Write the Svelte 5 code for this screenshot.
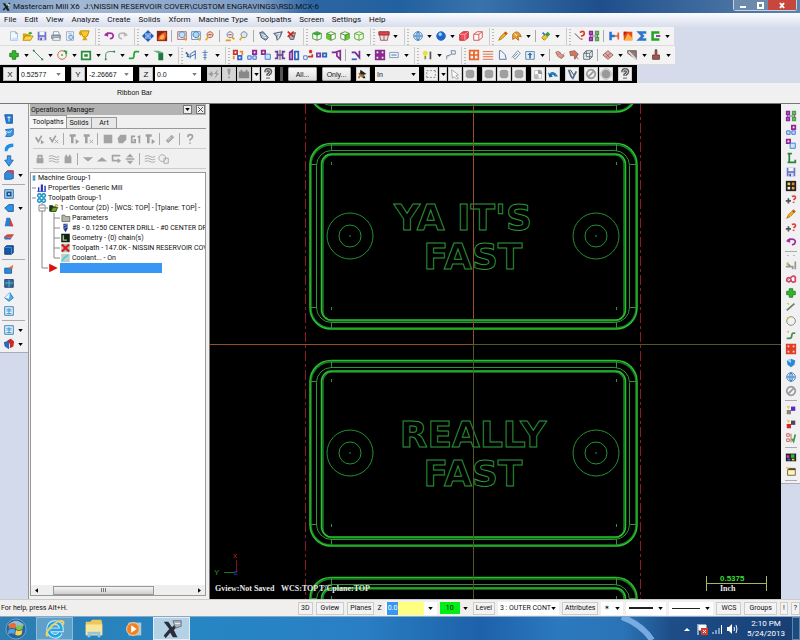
<script lang="ts">
  // [path, fill, stroke, stroke width], drawn on a 14 x 14 grid
  type Shape = [string, string, string?, number?];

  const BLOCKS = "M2 2h4v4h-4zM8 2h4v4h-4zM2 8h4v4h-4zM8 8h4v4h-4z";
  const DISC = "M7 2a5 5 0 1 0 .1 0z";
  const LENS = "M7 2a3.5 3.5 0 1 0 .1 0z";
  const CUBE = "M2 4L7 2L12 4V10L7 12L2 10z";
  const CUBE_EDGES = "M2 4L7 6L12 4M7 6V12";
  const QMARK = "M4.5 5Q4.500 2 7 2Q10 2 10 4.500Q10 6 7 8V9M7 11v1.500";

  const icons: Record<string, Shape[]> = {
    new: [["M3 2H9L11 4V12H3z", "#f4f9ff", "#9ab6d6"], ["M9 2V4H11", "none", "#7c9fc6"], ["M5 9H11V12H5z", "#cfe2f7"]],
    open: [["M1 11V4H5L6 5H10V11z", "#d9a400"], ["M1 12L4 7H13L10 12z", "#ffd84a", "#b98900"], ["M7 4Q10 0 12 4L10 5z", "#35a935"]],
    save: [["M2 2H12V12H2z", "#6f74c9"], ["M4 2H10V6H4z", "#f3f4ff"], ["M4 8H10V12H4z", "#d7dbf5"], ["M5 9H7V12H5z", "#51559d"]],
    print: [["M4 2H10L11 6H4z", "#fff", "#8497aa"], ["M2 6H12V10H2z", "#a8b3c0", "#6b7787"], ["M4 9H11L12 12H3z", "#fff", "#8997a8"]],
    preview: [["M3 2H11V12H3z", "#f4f8ff", "#8fa9c5"], ["M5 4H9M5 6H9", "none", "#a8bcd4"], ["M8 6a2.500 2.500 0 1 0 .1 0z", "#bfe0ff", "#4f7caf"]],
    cup: [["M3 1H13L11 7L9 8H6L5 6z", "#ffc928", "#b58200"], ["M7 8L5 12H11L9 8z", "#e3a200"], ["M3 2Q1 4 4 6", "none", "#d69b00", 2]],
    undo: [["M3 5Q10 2 12 6Q12 10 8 10", "none", "#9f2f9f", 2], ["M1 6L6 2V8z", "#9f2f9f"]],
    redo: [["M11 5Q4 2 2 6Q2 10 6 10", "none", "#b9b9b9", 2], ["M13 6L8 2V8z", "#b9b9b9"]],
    fit: [["M7 0L11 4H3zM7 14L3 10H11zM0 7L4 3V11zM14 7L10 3V11z", "#1f5fc0"], ["M7 4L10 7L7 10L4 7z", "#8fbdf4", "#1f5fc0"]],
    repaint: [["M1 1H13V13H1z", "#8c2418"], ["M2 11Q3 5 11 2L12 6L10 12H3z", "#f2581f"], ["M4 10Q5 6 9 5L10 9L7 11z", "#ffb64d"]],
    zoomWindow: [["M2 2H12V11H2z", "#e5edff", "#b65c5c"], [LENS, "#bfe0f7", "#4d7db1"], ["M9 9L12 12", "none", "#e59a1c", 2]],
    zoomIn: [["M2 2H12V11H2z", "#fff", "#4e79c5"], [LENS, "#a8dcf4", "#2f67a5"], ["M9 9L12 12", "none", "#e5a81c", 2]],
    zoomOut: [[LENS, "#f8d4c5", "#9c4b35"], ["M5 5.500H9", "none", "#c82020"], ["M5 8L2 12", "none", "#e5a81c", 2]],
    zoomHalf: [[LENS, "#e9edf4", "#5f7188"], ["M5 5.500H9", "none", "#c82020"], ["M9 8L12 11M2 12H8", "none", "#e59a1c", 2]],
    zoomFar: [[LENS, "#d9e9f4", "#6d7787"], ["M5 8L2 12", "none", "#e5a81c", 2]],
    spin: [["M2 3L6 2L12 9L9 12L4 9z", "#8fa7bd", "#3f546b"], ["M4 5L9 7M5 8L10 9", "none", "#fff"]],
    tilt: [["M2 4L12 2L9 9L6 12L5 7z", "#9db1c8", "#3b4d6b"], ["M5 5L9 4L7 10", "none", "#fff"]],
    cancelSpin: [["M3 6L11 3L9 11L5 11z", "#aab5c4", "#4a5568"], ["M2 2L9 8M9 2L2 8", "none", "#d22a1c", 2]],
    cubeTop: [[CUBE, "#fff", "#2f8e2a"], ["M2 4L7 2L12 4L7 6z", "#39b331"], [CUBE_EDGES, "none", "#2f8e2a"]],
    cubeFront: [[CUBE, "#fff", "#4f8e2a"], ["M2 4L7 6V12L2 10z", "#62c92d"], [CUBE_EDGES, "none", "#2f7d20"]],
    cubeRight: [[CUBE, "#fff", "#4f8e2a"], ["M12 4L7 6V12L12 10z", "#62c92d"], [CUBE_EDGES, "none", "#2f7d20"]],
    cubeIso: [[CUBE, "#f2ffe9", "#4f9e2a"], [CUBE_EDGES, "none", "#4f9e2a"]],
    planes: [["M1 2H13V6H1z", "#e0433f", "#8d2a2a"], ["M2 6H12L11 12H3z", "#f4dada", "#ae4a4a"], ["M7 5V12", "none", "#2f75c0"]],
    wire: [[DISC, "#eef7ff", "#2f75b8"], ["M2 7H12M7 2V12M7 2Q2 7 7 12Q12 7 7 2", "none", "#2f75b8"]],
    sphere: [[DISC, "#1e67c8", "#1e67c8"], ["M6 3a2 2 0 1 0 .1 0z", "#9fd0ff"]],
    redCube: [["M2 5L6 2H12V9L8 12H2z", "#f04b57", "#b41f2e"], ["M2 5H8V12M8 5L12 2", "none", "#ffb0b0"]],
    redWire: [["M2 5L6 2H12V9L8 12H2z", "#fff4f4", "#cc4a4a"], ["M2 5H8V12M8 5L12 2", "none", "#cc4a4a"]],
    pencil: [["M2 12L4 8L10 2L12 4L6 10z", "#f5b81f", "#a67400"], ["M9 3L11 5", "none", "#d63a2a", 2]],
    brush: [["M2 5Q6 0 10 4L12 8L8 7L9 12L5 9L2 11z", "#eda333", "#a86414"], ["M4 4L7 7", "none", "#fff"]],
    colors: [["M2 9L6 5L9 8L5 12z", "#f4cc25", "#9a7c00"], ["M6 5L9 2L12 5L9 8z", "#3b9b4b"], ["M3 3L6 6", "none", "#3d6fd0", 2]],
    analyze: [["M1 4L8 11", "none", "#333", 1], ["M7 3Q12 0 12 4Q12 6 9 7V8M9 10v1.500", "none", "#e03a20", 2]],
    chain: [["M2 2h3v3h-3zM2 9h3v3h-3z", "#fff", "#8e249a", 2], ["M9 2h3v3h-3zM9 9h3v3h-3z", "#fff", "#4ba33c", 2], ["M3 5V9M11 5V9M4 7H10", "none", "#6f45a5"]],
    dims: [["M3 2V12M3 7H8", "none", "#2f6fd2", 3], ["M12 3V11M8 7H12", "none", "#ec5a2a", 2]],
    fire: [["M2 2H12V12H2z", "#e9491b"], ["M3 11L7 4L12 9V12H3z", "#ffb33f"], ["M2 2H6L2 7z", "#b51e13"]],
    sigma: [["M12 3H4L8 7L4 11H12", "none", "#2d76ca", 3]],
    channel: [["M11 3H3V11H11", "none", "#23a523", 3], ["M7 7H12", "none", "#7a2a8e", 2]],
    plus: [["M5 2H9V5H12V9H9V12H5V9H2V5H5z", "#35b52b", "#1f7f1c"]],
    line: [["M2 2L12 12", "none", "#2b7d43", 1], ["M1 1h2v2h-2zM11 11h2v2h-2z", "#2b7d43"]],
    circle: [[DISC, "none", "#d4552b", 1], ["M6 6h2v2h-2z", "#2ba33a"], ["M9 2L12 3V6", "none", "#2ba33a", 2]],
    rect: [["M2 3H12V12H2z", "none", "#2b8b3b", 2], ["M5 6H9V9H5z", "#2b8b3b"]],
    fillet: [["M2 12V7Q2 3 7 3H12", "none", "#3b7d53", 1], ["M1 11h2v2h-2zM11 2h2v2h-2z", "#3b7d53"]],
    spline: [["M1 11H5Q7 11 7 7Q7 3 9 3H13", "none", "#2ba33a", 2]],
    solid: [["M1 2L8 2L13 4V13H7V5z", "#5fb57c"], ["M8 5H13V13H8z", "#247542"]],
    letter: [["M1 4L4 7M2 8L5 9", "none", "#33689f", 2], ["M6 11V6L12 2V12M6 9L12 6", "none", "#2d5fa8", 1]],
    drill: [["M7 1V13M4 4H10M5 7H9M5 10H9", "none", "#4a78b4", 1]],
    xform: [["M2 2h4v4h-4z", "#fff", "#c8372d", 2], ["M7 8h4v4h-4z", "#fff", "#2c69ca", 2], ["M9 3H12V7M2 8V12", "none", "#e2912a", 2]],
    xformB: [["M8 2h4v4h-4z", "#fff", "#922695", 2], ["M2 8h4v4h-4zM8 8h4v4h-4z", "#c7e0ff", "#2c69ca"]],
    xformC: [["M2 2h4v4h-4z", "#fff", "#922695", 2], ["M6 6h6v6h-6z", "#cfe5ff", "#2c75ca"]],
    mirror: [["M7 1V13", "none", "#3d3d3d"], ["M1 3H4V11H1M4 7H10M13 3H10V11H13", "none", "#6a3a9a", 2]],
    offset: [["M2 12V4L5 2V12z", "#fff", "#7b2e93", 2], ["M8 3H12V12H8z", "#fff", "#2f67ba", 2]],
    move: [["M2 8h4v4h-4z", "#fff", "#2c69ca"], ["M7 9H12V6", "none", "#c8372d", 2], ["M10 1a2 2 0 1 0 .1 0z", "#d0342c"]],
    array: [["M1 5h4v4h-4z", "#fff", "#7340a3", 2], ["M8 5h4v4h-4z", "#fff", "#2f67ba", 2]],
    project: [["M2 4H6L12 2V12L8 8V4", "none", "#862d93", 2]],
    trim: [["M2 4H6L11 10V2", "none", "#762d93", 2], ["M2 12H8", "none", "#2f67ba", 2]],
    grid4: [[BLOCKS, "#fff", "#8a2b8f", 2]],
    stretch: [["M2 4H12V10H2z", "none", "#7c8db5"], ["M4 7H10", "none", "#2f67ba"]],
    bulb: [["M5 2a3 3 0 1 0 .1 0z", "#e7e33a"], ["M5 8V12", "none", "#8b8b44", 2], ["M11 3V12", "none", "#555", 2]],
    note: [["M7 2H12V6H8zM3 8L8 6M2 12V8H5", "none", "#687ca5"]],
    net: [["M2 2H12V12H2zM2 7H12M7 2V12", "none", "#e8652b", 2]],
    rows: [["M1 3H13M1 6H13M1 9H13M1 12H13", "none", "#df5a2d"]],
    sheet: [["M4 2L6 2Q12 6 12 12H4z", "#eef4ff", "#4d6794"]],
    clip: [["M2 10L9 2L12 5L6 12L4 10L9 5", "none", "#6685a5"]],
    up: [["M2 3H12V12H2z", "#e6eff8", "#4c7da5"], ["M7 4L10 7H8V11H6V7H4z", "#3773a8"]],
    flake: [["M2 4Q6 1 8 6L12 8L9 11L5 9z", "#e49a8b", "#a66055"], ["M3 8L8 4M8 11L12 5", "none", "#9d9292"]],
    flakeB: [["M2 3L8 2L12 6L8 12L7 7L3 8z", "#d87462", "#8b6457"], ["M9 8L12 12", "none", "#638050"]],
    frame: [["M2 5L5 2H12V9L9 12H2zM2 5H9V12M9 5L12 2M5 2V9H12", "none", "#52616e"]],
    mesh: [["M1 7L7 2L13 7L7 12z", "#e5a69b", "#8f625b"], ["M4 5L9 10M5 9L10 5", "none", "#8f625b"]],
    hatch: [["M2 2H12V12L2 5z", "#9a7672", "#5a5050"], ["M3 3L12 12", "none", "#ddd", 2]],
    plunge: [["M6 1H8V7H11V12H3V7H6z", "#a45750", "#6d3732"]],
    upBlue: [["M2 2H11V12H4z", "#237ad2", "#155ba4"], ["M7 4V10M5 5H9", "none", "#fff"]],
    wrap: [["M3 3L12 2V9Q10 12 3 11L5 8z", "#3f97e2", "#1b68b9"], ["M3 5Q8 8 10 4", "none", "#fff"]],
    arc: [["M2 12Q1 3 12 3L12 7Q6 7 5 12z", "#1e8fe8"]],
    drop: [["M5 1H9V6H12L7 13L2 6H5z", "#3b9be8", "#1b61ad"]],
    round: [["M2 5L5 2H12V11L9 12H2z", "#2d8ee0", "#185aa0"], ["M5 2H12V7Q9 3 5 4z", "#e0403a"]],
    shell: [["M2 2H12V12H2z", "#aed9f8", "#1c5b9d"], ["M5 5H9V9H5z", "#fff", "#145493", 2]],
    ball: [["M2 7L7 3H12V11H6z", "#3192e8", "#14589c"]],
    draft: [["M4 2H8L12 12H2z", "#2381d2"], ["M8 2L12 12H8z", "#e33a30"]],
    slab: [["M1 8L5 5H13L10 9z", "#d6493b"], ["M1 8L10 9L9 11H2z", "#426db0"]],
    box: [["M2 4L4 2H12V10L10 12H2z", "#1558a7", "#0b3970"], ["M2 4H10V12", "none", "#4e98df"]],
    sprout: [["M2 6H10V12H2z", "#2789db", "#155ba4"], ["M6 6L12 2L11 7z", "#ee6b2d"]],
    dice: [["M2 3H12V12H2z", "#2d6b9f", "#173c61"], ["M7 3V12M2 7H12", "none", "#76b3dc"]],
    cone: [["M2 8L8 2L12 8L7 12z", "#52aee8", "#2377ae"], ["M2 8L7 9L8 2", "#e8f6ff"]],
    table: [["M2 2H12V12H2z", "#e5f4ff", "#2274ac"], ["M4 5H10M4 7H10M4 10H10M7 4V11", "none", "#3393c7"]],
    heart: [["M1 5L7 3V13L2 10z", "#2968be"], ["M5 3L9 1L13 4L12 10L8 12V7z", "#c82b27"]],
    letterL: [["M3 2H8M5 2V12M3 12H12V9", "none", "#28833b", 2]],
    colorGrid: [["M1 1H13V13H1z", "#222"], ["M3 3h3v3h-3z", "#f5d328"], ["M8 3h3v3h-3z", "#e88432"], ["M3 8h3v3h-3z", "#f7f7f7"], ["M8 8h3v3h-3z", "#ff9f35"]],
    colorGridB: [["M1 3H13V12H1z", "#222"], ["M2 5h3v3h-3z", "#dd35a5"], ["M7 4h4v4h-4z", "#35b742"], ["M3 9h3v2h-3z", "#2b76de"], ["M8 9h3v2h-3z", "#f0d22f"]],
    what: [["M1 8H7M4 5V11", "none", "#555", 2], ["M8 3Q13 1 12 5L10 7M10 9v1.500", "none", "#dd3f30", 2]],
    arrowOut: [["M1 9H9V12M12 3V12M2 5L6 8", "none", "#969a8c", 2], ["M2 4L5 4L3 7z", "#e3bb20"]],
    goggles: [["M2 9Q2 4 6 6Q10 2 12 5V10Q8 12 7 8Q5 12 2 9z", "#fff", "#d6455a", 2], ["M2 10L8 4", "none", "#5989ca"]],
    picks: [["M2 11L11 3", "none", "#688466", 2], ["M2 3L4 2L5 5z", "#ddb81e"]],
    circleThin: [[DISC, "none", "#77815a"], ["M2 3L5 2L4 5z", "#e6ba1b"]],
    curve: [["M2 11H5Q8 11 8 7Q8 4 12 5", "none", "#4c8b4f", 2], ["M2 3L5 2L4 5z", "#e6ba1b"]],
    redGrid: [[BLOCKS, "#ffd8cb", "#df3d28", 2]],
    gem: [["M2 4L7 2L12 4L11 9L7 12L3 9z", "#2d87d7"], ["M2 4L7 2V7z", "#9ad5f8"]],
    no: [[DISC, "none", "#999", 2], ["M4 10L10 4", "none", "#999", 2]],
    squares: [["M7 3h5v5h-5z", "#5428d5"], ["M2 7h5v5h-5z", "#8a8a70"], ["M2 2L6 3L4 6z", "#f1c52d"]],
    squaresRed: [["M7 3h5v5h-5z", "#4b4b4b"], ["M2 7h5v5h-5z", "#d62828"], ["M2 2L6 3L4 6z", "#f1c52d"]],
    listCheck: [["M2 2H5V5H2zM2 8H5V11H2zM7 2V12", "#fff", "#bb5045"], ["M8 8L10 11L12 3", "none", "#3a9b47", 2]],
    window: [["M3 4H12V12H3z", "#fff5b8", "#65583a"], ["M3 4H12V6H3z", "#58492b"], ["M1 2L5 3L3 6z", "#f2c431"]],
    checks: [["M2 5L5 10L9 3", "none", "#a0a0a0", 2], ["M8 8L12 11L8 13z", "#a0a0a0"]],
    checksX: [["M2 5L5 10L9 3", "none", "#a0a0a0", 2], ["M8 8L12 12M12 8L8 12", "none", "#a0a0a0"]],
    tool: [["M2 3H9M5 3V12", "none", "#a0a0a0", 3], ["M9 7L13 10L9 13z", "#a0a0a0"]],
    toolX: [["M2 3H9M5 3V12", "none", "#a0a0a0", 3], ["M9 8L13 12M13 8L9 12", "none", "#a0a0a0"]],
    graySquare: [["M2 2H12V12H2z", "#a3a3a3"]],
    grayBlob: [["M2 6L5 2H12V8L8 12H3z", "#a3a3a3"]],
    g1: [["M6 4H2V11H6V8H4M9 5L11 4V12", "none", "#a0a0a0", 2]],
    grayClip: [["M2 9L9 2L12 5L5 12z", "#aaa"], ["M5 8L8 5", "none", "#eee"]],
    grayHelp: [[QMARK, "none", "#a0a0a0", 2]],
    lock: [["M3 6H11V12H3z", "#a3a3a3"], ["M5 6V3H9V6", "none", "#a3a3a3", 2]],
    waves: [["M1 4Q4 2 7 4T13 4M1 7Q4 5 7 7T13 7M1 10Q4 8 7 10T13 10", "none", "#a3a3a3"]],
    post: [["M3 4H11V12H3zM4 2H6V4H4zM8 2H10V4H8z", "#a3a3a3"]],
    down: [["M1 5H13L7 10z", "#a3a3a3"]],
    upGray: [["M1 10H13L7 5z", "#a3a3a3"]],
    loop: [["M12 3H3V9H10", "none", "#a3a3a3", 2], ["M9 6L13 9L9 12z", "#a3a3a3"]],
    upDown: [["M7 1L11 5H3zM7 13L11 9H3zM2 6H12V8H2z", "#a3a3a3"]],
    overlap: [["M5 2a4 4 0 1 0 .1 0z", "none", "#a3a3a3"], ["M7 6H12V12H7z", "none", "#a3a3a3"]],
    flash: [["M1 7H6M4 4V10", "none", "#999", 2], ["M12 1L7 7H10L7 13L13 6H10z", "#999"]],
    bang: [["M5 1H9L8 8H6zM6 10H8V12H6z", "#999"]],
    config: [["M1 4H13V12H1zM3 2H5V4H3zM9 2H11V4H9z", "#888"]],
    help: [[QMARK, "none", "#555", 4], [QMARK, "none", "#eee", 1]],
    pick: [["M4 2L11 7L8 8L10 12L7 12L6 8L3 10z", "#222"], ["M2 6L7 11M2 12Q3 7 8 9", "none", "#aa7735", 2]],
    marquee: [["M2 3H4M6 3H8M10 3H12V5M12 7V9M12 11H10M8 11H6M4 11H2V9M2 7V5", "none", "#777"]],
    arrow: [["M3 2L11 8L8 9L11 12L9 13L6 10L4 12z", "#fff", "#999"]],
    blob: [["M4 2H10L12 4V10L10 12H4L2 10V4z", "#a0a0a0"]],
    pie: [["M3 3H11V12H3z", "#fff", "#bbb"], ["M7 2V7H12A5 5 0 0 0 7 2z", "#999"], ["M5 7a3 3 0 1 0 .1 0z", "#bbb"]],
    bend: [["M2 9Q4 2 10 6L13 10L9 10Q6 6 5 10z", "#237ebe"], ["M1 5L3 11L7 10z", "#16639c"]],
    pen: [["M3 2L6 10L8 12L12 4", "none", "#526d95", 2], ["M5 2L9 8", "none", "#333"]],
    disc: [[DISC, "#999"], ["M7 1a6 6 0 1 0 .1 0z", "none", "#aaa"]],
    folder: [["M2 3H6L7 5H13V12H2z", "#b6b6a8", "#555"]],
    cutter: [["M4 1H10V8L7 13L4 8z", "#253c8e"], ["M4 4L10 2M4 8L10 5", "none", "#a8bbed"]],
    geometry: [["M1 1H13V13H1z", "#10240f"], ["M4 3V10H9", "none", "#a0c3a0", 2]],
    cross: [["M1 1H13V13H1z", "#b6bcb6"], ["M2 2L12 12M12 2L2 12", "none", "#db1717", 3]],
    coolant: [["M1 1H13V13H1z", "#c2cfc9"], ["M2 12Q4 6 11 3", "none", "#39d4d4", 2]],
    props: [["M2 6h2v6h-2zM6 2h3v10h-3zM11 4h2v8h-2z", "#2332b4"], ["M1 12H13", "none", "#2332b4"]],
    group: [["M4 1a2.500 2.500 0 1 0 .1 0zM10 1a2.500 2.500 0 1 0 .1 0zM4 8a2.500 2.500 0 1 0 .1 0zM10 8a2.500 2.500 0 1 0 .1 0z", "#c6f0ff", "#2194c8", 2]],
    openFolder: [["M1 3H6L7 5H11V12H1z", "#17351a"], ["M3 12L6 6H13L10 12z", "#6aa62d", "#26320d"], ["M9 4Q11 0 13 4", "none", "#d5b728", 2]],
    machine: [["M4 1H10V13H4z", "#2e88bd"], ["M4 5H10M4 9H10", "none", "#c6ecff"]],
    go: [["M1 1L13 7L1 13z", "#df1010"]],
  };

  const menus = ["File", "Edit", "View", "Analyze", "Create", "Solids", "Xform", "Machine Type", "Toolpaths", "Screen", "Settings", "Help"];

  // "|" separator, ":" group grip, "v" drop-down arrow
  const mainBar = ("new open save print preview cup : undo redo : fit repaint | zoomWindow zoomIn zoomOut | zoomHalf zoomFar | spin tilt cancelSpin " +
    ": cubeTop cubeFront cubeRight cubeIso : planes v : wire v sphere v redCube redWire : pencil brush v | colors v : analyze chain | dims fire sigma channel v").split(" ");
  const sketchBar = ("plus v line v circle v rect v fillet v spline v solid v : letter drill v : xform xformB xformC mirror offset move array project " +
    "| trim v grid4 stretch v : bulb v note : net rows sheet clip up v | flake flakeB frame | mesh v hatch v plunge v").split(" ");
  const leftBar = "upBlue,wrap,arc,drop,round v,|,shell,ball v,draft,slab,box,|,sprout,dice,cone,table,|,table v,heart v".split(",");
  const rightBar = ("chain xformB xformC letterL save colorGrid what pencil what undo | : arrowOut goggles plus picks circleThin curve redGrid gem wire no " +
    "| squares squaresRed listCheck | colorGridB window |").split(" ");
  const opsBar = "checks checksX | tool toolX | graySquare grayBlob g1 tool | grayClip | grayHelp".split(" ");
  const editBar = "lock waves post | down upGray loop upDown | waves overlap".split(" ");

  let coords = $state([
    { axis: "X", value: "0.52577" },
    { axis: "Y", value: "-2.26667" },
    { axis: "Z", value: "0.0" },
  ]);
  let depth = $state("0.0");
  let tab = $state("Toolpaths");
  let selected = $state(9);

  const tree = [
    { indent: 0, guide: "", icon: "machine", text: "Machine Group-1" },
    { indent: 5, guide: "M1 5H5", icon: "props", text: "Properties - Generic Mill" },
    { indent: 5, guide: "M1 5H5", icon: "group", text: "Toolpath Group-1" },
    { indent: 17, guide: "M11 0V2M11 8V10M8 2H14V8H8zM9 5H13M14 5H17", icon: "openFolder", text: "1 - Contour (2D) - [WCS: TOP] - [Tplane: TOP] -" },
    { indent: 29, guide: "M11 0V10M23 0V10M23 5H29", icon: "folder", text: "Parameters" },
    { indent: 29, guide: "M11 0V10M23 0V10M23 5H29", icon: "cutter", text: "#8 - 0.1250 CENTER DRILL - #0 CENTER DRILL" },
    { indent: 29, guide: "M11 0V10M23 0V10M23 5H29", icon: "geometry", text: "Geometry - (0) chain(s)" },
    { indent: 29, guide: "M11 0V10M23 0V10M23 5H29", icon: "cross", text: "Toolpath - 147.0K - NISSIN RESERVOIR COVER" },
    { indent: 29, guide: "M11 0V10M23 0V5H29", icon: "coolant", text: "Coolant... - On" },
    { indent: 17, guide: "M11 0V5H17", icon: "go", text: "" },
  ];

  // Every cover is the same part, 217 units below the one before
  const plates = [
    { y: -217, lines: [] },
    { y: 0, lines: ["YA IT'S", "FAST"] },
    { y: 217, lines: ["REALLY", "FAST"] },
    { y: 434, lines: [] },
  ];
</script>

{#snippet icon(name: string)}
  <svg class="icon" viewBox="0 0 14 14" aria-hidden="true">
    {#each icons[name] as [d, fill, stroke, width]}
      <path {d} {fill} stroke={stroke ?? "none"} stroke-width={width ?? 1} />
    {/each}
  </svg>
{/snippet}

{#snippet arrow()}
  <svg class="tri" viewBox="0 0 6 4" aria-hidden="true"><path d="M0 0H6L3 4z" /></svg>
{/snippet}

{#snippet bar(items: string[])}
  {#each items as item}
    {#if item === "|"}
      <span class="sep"></span>
    {:else if item === ":"}
      <span class="grip"></span>
    {:else if item === "v"}
      <button class="drop" aria-label="More">{@render arrow()}</button>
    {:else}
      <button class="tool" aria-label={item}>{@render icon(item)}</button>
    {/if}
  {/each}
{/snippet}

<div class="app">
  <header class="titlebar">
    <svg class="logo" viewBox="0 0 14 14" aria-hidden="true">
      <path d="M1 1H5L7 5L11 0L13 2L9 7L12 13H8L6 9L3 13L1 11L5 7z" fill="#18251f" />
      <path d="M8 1L13 4L9 6z" fill="#e4ebe9" />
    </svg>
    <span class="title">Mastercam Mill X6&nbsp; J:\NISSIN RESERVOIR COVER\CUSTOM ENGRAVINGS\RSD.MCX-6</span>
    <div class="win-buttons">
      <button aria-label="Minimize"><svg viewBox="0 0 12 10"><path d="M3 6H9V8H3z" fill="#fff" /></svg></button>
      <button aria-label="Restore"><svg viewBox="0 0 12 10"><path d="M4 3H9V8H4z" fill="none" stroke="#fff" stroke-width="2" /></svg></button>
      <button class="close" aria-label="Close"><svg viewBox="0 0 12 10"><path d="M4 3L8 8M8 3L4 8" stroke="#fff" stroke-width="2" /></svg></button>
    </div>
  </header>

  <nav class="menubar">
    {#each menus as menu}
      <button>{menu}</button>
    {/each}
  </nav>

  <div class="band"><div class="toolbar main">{@render bar(mainBar)}</div></div>
  <div class="band"><div class="toolbar sketch">{@render bar(sketchBar)}</div></div>

  <div class="band">
    <div class="coordbar">
      {#each coords as c}
        <button class="axis">{c.axis}</button>
        <span class="combo">
          <input aria-label={c.axis} bind:value={c.value} />
          <button class="pale" aria-label="History">{@render arrow()}</button>
        </span>
      {/each}
      <div class="cells">
        {#each ["flash", "bang", "config"] as name}
          <button class="cell gray" aria-label={name}>{@render icon(name)}</button>
        {/each}
        <button class="cell narrow" aria-label="More">{@render arrow()}</button>
        <button class="cell" aria-label="Help">{@render icon("help")}</button>
      </div>
      <span class="handle"></span>
      <button class="word">All...</button>
      <button class="word">Only...</button>
      <button class="cell" aria-label="Pick">{@render icon("pick")}</button>
      <span class="select">
        <select aria-label="Selection"><option>In</option><option>Out</option></select>
        {@render arrow()}
      </span>
      <div class="cells">
        <button class="cell" aria-label="Window">{@render icon("marquee")}</button>
        <button class="cell narrow" aria-label="More">{@render arrow()}</button>
        <button class="cell" aria-label="Arrow">{@render icon("arrow")}</button>
        <button class="cell" aria-label="Solid">{@render icon("blob")}</button>
      </div>
      {#each [["blob", "blob", "blob"], ["pie", "bend"], ["pen"], ["no", "disc"], ["help"]] as set}
        <div class="cells">
          {#each set as name}
            <button class="cell" aria-label={name}>{@render icon(name)}</button>
          {/each}
        </div>
      {/each}
    </div>
  </div>

  <div class="ribbon">Ribbon Bar</div>

  <main class="work">
    <aside class="side left">
      <div class="side-tools">
        {#each leftBar as item}
          {#if item === "|"}
            <span class="rule"></span>
          {:else}
            <div class="side-row">{@render bar(item.split(" "))}</div>
          {/if}
        {/each}
      </div>
    </aside>

    <section class="panel">
      <div class="panel-head">
        <span>Operations Manager</span>
        <button aria-label="Menu">{@render arrow()}</button>
        <button aria-label="Close"><svg class="x" viewBox="0 0 6 6"><path d="M0 0L6 6M6 0L0 6" stroke="#333" /></svg></button>
      </div>
      <div class="tabs">
        {#each ["Toolpaths", "Solids", "Art"] as name}
          <button class:active={tab === name} onclick={() => (tab = name)}>{name}</button>
        {/each}
      </div>
      <div class="ops">{@render bar(opsBar)}</div>
      <div class="ops">{@render bar(editBar)}</div>
      <div class="tree">
        <ul>
          {#each tree as row, i}
            <li>
              <svg class="guide" viewBox="0 0 {row.indent} 10" style:width="{row.indent}px" aria-hidden="true">
                <path d={row.guide} />
              </svg>
              {@render icon(row.icon)}
              <button class:selected={selected === i && !row.text} onclick={() => (selected = i)} aria-label={row.text || "Insert arrow"}>{row.text}</button>
            </li>
          {/each}
        </ul>
        <div class="hscroll">
          <svg viewBox="0 0 4 6"><path d="M4 0V6L0 3z" /></svg>
          <div class="track"><div class="thumb"></div></div>
          <svg viewBox="0 0 4 6"><path d="M0 0V6L4 3z" /></svg>
        </div>
      </div>
    </section>

    <section class="viewport">
      <svg viewBox="210 104 571 495" preserveAspectRatio="xMidYMid slice">
        <path class="bounds" d="M305.500 104V599M640.500 104V599" />
        {#each plates as plate}
          <g transform="translate(0 {plate.y})">
            <rect class="dim" x="311" y="145" width="325" height="183" rx="20" />
            <rect class="bright" x="310" y="143.500" width="327" height="185.500" rx="21" />
            <rect class="mid" x="316.500" y="150.500" width="313" height="172" rx="15" />
            <rect class="dim" x="323" y="155" width="301" height="166" rx="9" />
            <rect class="bright" x="321.500" y="154" width="304" height="166" rx="10" />
            <path class="mid" d="M331.500 143V151M616.500 143V151M331.500 322V329M616.500 322V329M309 164.500H317M630 164.500H637M309 307.500H317M630 307.500H637" />
            <path class="mid" d="M331.500 162V165M616.500 162V165M331.500 307V310M616.500 307V310" />
            {#each [350, 596] as cx}
              <circle class="hole" {cx} cy="236" r="23" />
              <circle class="hole" {cx} cy="236" r="11" />
              <path class="mid" d="M{cx} 235V237" />
            {/each}
            {#each plate.lines as text, i}
              <text class="engraving" x={i === 0 && plate.y === 0 ? 463 : 473} y={230 + i * 39}>{text}</text>
            {/each}
          </g>
        {/each}
        <path class="axis-near" d="M473.500 104V344.500H210" />
        <path class="axis-far" d="M473.500 344V599M473 344.500H781" />

        <g class="gnomon">
          <path d="M236.500 560V572" stroke="#8c1010" />
          <path d="M224 572.500H235" stroke="#118011" />
          <text x="233" y="558" fill="#c01818">x</text>
          <text x="214" y="575" fill="#18a018">Y</text>
          <text x="234" y="575" fill="#3030e0">z</text>
        </g>
        <text class="view-info" x="215" y="591">Gview:Not Saved</text>
        <text class="view-info" x="281" y="591">WCS:TOP</text>
        <text class="view-info" x="319" y="591">T/Cplane:TOP</text>
        <path d="M706 583.500H766M706.500 576V591M766.500 576V591" stroke="#a8b45e" />
        <text class="scale" x="720" y="581">0.5375</text>
        <text class="view-info" x="720" y="591">Inch</text>
      </svg>
    </section>

    <aside class="side right">
      <div class="side-tools">{@render bar(rightBar)}</div>
    </aside>
  </main>

  <div class="status">
    <span class="hint">For help, press Alt+H.</span>
    <button class="flat">3D</button>
    <button class="flat wide">Gview</button>
    <button class="flat">Planes</button>
    <label for="depth">Z</label>
    <span class="depth">
      <input id="depth" bind:value={depth} />
      <button aria-label="Depths">{@render arrow()}</button>
    </span>
    <button class="color">10</button>
    <button class="color-drop" aria-label="Colors">{@render arrow()}</button>
    <button class="flat">Level</button>
    <span class="select level">
      <select aria-label="Level"><option>3 : OUTER CONTOUR</option></select>
      {@render arrow()}
    </span>
    <button class="flat">Attributes</button>
    <button class="style" aria-label="Point style"><span>✶</span>{@render arrow()}</button>
    <button class="style" aria-label="Line style"><i></i>{@render arrow()}</button>
    <button class="style" aria-label="Line width"><i class="thin"></i>{@render arrow()}</button>
    <button class="flat wide">WCS</button>
    <button class="flat wide">Groups</button>
    <button class="flat">!</button>
    <button class="flat">?</button>
  </div>

  <footer class="taskbar">
    <svg class="swoosh" viewBox="0 0 800 24" preserveAspectRatio="none" aria-hidden="true">
      <path d="M622 0Q642 8 652 24" />
    </svg>
    <button class="start" aria-label="Start">
      <svg viewBox="0 0 24 24">
        <circle cx="12" cy="12" r="11" fill="#28649b" stroke="#72abd0" />
        <path d="M3 8Q12 -2 21 8Q12 12 3 8z" fill="#8fbdd9" />
        <path d="M5 7Q9 4 12 7L11 12Q8 10 4 12z" fill="#ee6a2c" />
        <path d="M13 7Q16 10 20 7L19 12Q15 14 12 12z" fill="#86c440" />
        <path d="M4 13Q8 11 11 13L10 18Q7 15 3 18z" fill="#4aa8e8" />
        <path d="M12 13Q15 15 19 13L18 18Q14 20 11 18z" fill="#fbd043" />
      </svg>
    </button>
    <button class="task open" aria-label="Internet Explorer">
      <svg viewBox="0 0 24 24">
        <path d="M18 16Q16 20 12 20Q5 19 5 12Q6 5 12 5Q19 5 19 13H7" fill="none" stroke="#d5f1fb" stroke-width="5" />
        <path d="M18 16Q16 20 12 20Q5 19 5 12Q6 5 12 5Q19 5 19 13H7" fill="none" stroke="#25a5e8" stroke-width="3" />
        <path d="M4 20Q0 17 9 8Q18 1 21 4Q22 5 20 8" fill="none" stroke="#f4d35d" stroke-width="2" />
      </svg>
    </button>
    <button class="task" aria-label="Explorer">
      <svg viewBox="0 0 24 24">
        <path d="M3 4H8L10 2H20L21 6V18H3z" fill="#ecc75d" />
        <path d="M3 7H21V19H3z" fill="#fae69b" />
        <path d="M5 15H19V21H16V18H8V21H5z" fill="#8fc6e8" />
      </svg>
    </button>
    <button class="task" aria-label="Media Player">
      <svg viewBox="0 0 24 24">
        <path d="M7 5H21V19H7z" fill="#a9c9dd" />
        <circle cx="12" cy="12" r="7" fill="#f08125" stroke="#fbd7a8" />
        <path d="M10 8L16 12L10 16z" fill="#fff" />
      </svg>
    </button>
    <button class="task current" aria-label="Mastercam">
      <svg viewBox="0 0 24 24">
        <path d="M3 4H8L12 10L18 4L21 6L14 13L18 21H13L10 16L5 22L3 19L9 12z" fill="#2b2d3b" />
        <path d="M13 3H22V9L16 11z" fill="#aeb4bd" stroke="#666d78" />
        <path d="M15 6H21" stroke="#eee" />
      </svg>
    </button>
    <div class="tray">
      <svg viewBox="0 0 12 12"><path d="M3 8H9L6 5z" fill="#fff" /></svg>
      <svg viewBox="0 0 12 12">
        <path d="M2 1V12M3 2H10V7H3z" fill="#fff" stroke="#fff" />
        <path d="M5 5H12V12H5z" fill="#d83d2c" />
        <path d="M7 7L10 10M10 7L7 10" stroke="#fff" />
      </svg>
      <svg viewBox="0 0 12 12"><path d="M1 9h2v2h-2zM4 7h2v4h-2zM7 5h2v6h-2z" fill="#7b9fc0" /><path d="M10 2h1v9h-1z" fill="#fff" /></svg>
      <svg viewBox="0 0 12 12"><path d="M1 4H3L6 1V11L3 8H1z" fill="#fff" /><path d="M8 4Q9 6 8 8M10 2Q12 6 10 10" fill="none" stroke="#fff" /></svg>
    </div>
    <div class="clock">
      <span>2:10 PM</span>
      <span>5/24/2013</span>
    </div>
    <button class="peek" aria-label="Show desktop"></button>
  </footer>
</div>

<style>
  :global(body) {
    margin: 0;
    background: #d5dcec;
  }

  .app {
    display: flex;
    flex-direction: column;
    height: 100vh;
    overflow: hidden;
    background: #f0f0f0;
    color: #111;
    font: 8px/10px Roboto, "Open Sans", sans-serif;
    white-space: nowrap;
  }

  button,
  input,
  select {
    box-sizing: border-box;
    margin: 0;
    padding: 0;
    border: none;
    border-radius: 0;
    background: none;
    color: inherit;
    font: inherit;
  }

  svg {
    display: block;
    flex: none;
  }

  .icon {
    width: 12px;
    height: 12px;
  }

  .tri {
    width: 5px;
    height: 3px;
  }

  .titlebar {
    display: flex;
    align-items: center;
    flex: none;
    height: 13px;
    padding: 0 3px 0 2px;
    background: linear-gradient(90deg, #7f9fc6 0, #a2b8d4 80px, #7c9cc5 260px, #2d65a3 310px, #22609f 400px, #3973ac 60%, #1e4f8b 75%, #5b83ae 100%);
  }

  .logo {
    width: 9px;
    height: 10px;
  }

  .title {
    flex: 1;
    margin-left: 2px;
  }

  .win-buttons {
    display: flex;
    align-self: flex-start;
    border: 1px solid #c4d3e3;
    border-top: none;
    border-radius: 0 0 3px 3px;
  }

  .win-buttons button {
    width: 17px;
    height: 10px;
    display: flex;
    justify-content: center;
    background: #6c8aab;
  }

  .win-buttons .close {
    width: 28px;
    background: #c8473c;
  }

  .win-buttons svg {
    width: 12px;
    height: 10px;
  }

  .menubar {
    display: flex;
    align-items: center;
    gap: 8px;
    flex: none;
    height: 14px;
    padding-left: 4px;
    background: linear-gradient(#fafbfe, #d8deed);
  }

  .band {
    display: flex;
    flex: none;
    background: #d5dbeb;
  }

  .toolbar {
    display: flex;
    align-items: center;
    height: 19px;
    padding: 0 2px 0 7px;
    background: #f3f3f3;
    border-bottom: 1px solid #dcdcdc;
    box-sizing: border-box;
  }

  .tool {
    display: flex;
    align-items: center;
    justify-content: center;
    flex: none;
    width: 14px;
    height: 14px;
  }

  .drop {
    display: flex;
    align-items: center;
    justify-content: center;
    flex: none;
    width: 9px;
    height: 14px;
  }

  .sketch .drop {
    width: 10px;
  }

  .sep {
    flex: none;
    width: 1px;
    height: 12px;
    margin: 0 3px 0 2px;
    background: #aaa;
  }

  .grip {
    flex: none;
    width: 6px;
    height: 17px;
    margin-left: 4px;
    border-left: 1px solid #ccc;
    background: radial-gradient(circle, #bbb 1px, transparent 1px) 0 0 / 6px 3px;
  }

  .sketch .grip {
    width: 5px;
    margin-left: 3px;
  }

  .coordbar {
    display: flex;
    align-items: center;
    gap: 5px;
    height: 18px;
    padding: 0 5px 0 3px;
    background: #000;
    font: 7px/9px "Liberation Sans", Arial, sans-serif;
  }

  .axis {
    width: 14px;
    height: 14px;
    margin-right: -3px;
    background: #ececec;
    border: 1px solid #bbb;
    font-size: 8px;
  }

  .combo {
    display: flex;
    width: 46px;
    height: 14px;
    margin-right: 1px;
    background: #fff;
  }

  .combo input {
    flex: 1;
    min-width: 0;
    padding-left: 2px;
  }

  .combo button {
    display: flex;
    align-items: center;
    width: 9px;
    opacity: 0.5;
  }

  .cells {
    display: flex;
    gap: 1px;
  }

  .cell {
    display: flex;
    align-items: center;
    justify-content: center;
    width: 14px;
    height: 14px;
    background: #f0f0f0;
    border: 1px solid #ccc;
  }

  .cell.gray {
    background: #d5d5d5;
  }

  .cell.narrow {
    width: 8px;
  }

  .handle {
    width: 3px;
    height: 14px;
    background: #555;
  }

  .word {
    width: 29px;
    height: 14px;
    background: linear-gradient(#fafafa, #ddd);
    border: 1px solid #aaa;
    border-radius: 1px;
  }

  .select {
    display: flex;
    align-items: center;
    width: 44px;
    height: 14px;
    padding-right: 3px;
    box-sizing: border-box;
    background: #eee;
  }

  .select select {
    flex: 1;
    min-width: 0;
    padding-left: 2px;
    appearance: none;
    text-overflow: clip;
  }

  .ribbon {
    flex: none;
    height: 20px;
    padding-left: 117px;
    border-bottom: 1px solid #777;
    background: #f0f0f0;
    font: 7px/20px "Liberation Sans", Arial, sans-serif;
  }

  .work {
    display: flex;
    flex: 1;
    min-height: 0;
  }

  .side {
    flex: none;
    background: #d3daec;
  }

  .side-tools {
    display: flex;
    flex-direction: column;
    background: #f1f1f3;
    border-bottom: 1px solid #aab;
  }

  .left {
    width: 28px;
  }

  .left .side-tools {
    padding: 8px 0 1px 2px;
  }

  .side-row {
    display: flex;
    height: 14px;
  }

  .rule {
    height: 1px;
    margin: 2px 3px 2px 0;
    background: #aaa;
  }

  .right {
    width: 19px;
  }

  .right .side-tools {
    align-items: center;
    padding-top: 5px;
  }

  .right .sep {
    width: 12px;
    height: 1px;
    margin: 2px 0;
  }

  .right .grip {
    width: 12px;
    height: 4px;
    margin: 0;
    border: none;
  }

  .panel {
    display: flex;
    flex-direction: column;
    flex: none;
    width: 182px;
    padding: 0 3px 3px 1px;
    box-sizing: border-box;
    border-left: 1px solid #999;
    border-right: 1px solid #777;
    background: #f0f0f0;
    font-size: 7px;
  }

  .panel-head {
    display: flex;
    align-items: center;
    gap: 4px;
    height: 11px;
    padding: 0 1px;
    background: #b3b3b3;
  }

  .panel-head span {
    flex: 1;
  }

  .panel-head button {
    display: flex;
    align-items: center;
    justify-content: center;
    width: 9px;
    height: 9px;
    background: #eee;
    border: 1px solid #777;
  }

  .x {
    width: 5px;
    height: 5px;
  }

  .tabs {
    display: flex;
    align-items: flex-end;
    height: 13px;
    border-bottom: 1px solid #999;
  }

  .tabs button {
    width: 25px;
    height: 11px;
    border: 1px solid #999;
    border-bottom: none;
    border-left: none;
    background: #e8e8e8;
  }

  .tabs .active {
    width: 37px;
    height: 13px;
    background: #f6f6f6;
  }

  .ops {
    display: flex;
    align-items: center;
    height: 18px;
    margin-left: 3px;
    padding-top: 1px;
    border-bottom: 1px solid #ccc;
  }

  .tree {
    display: flex;
    flex-direction: column;
    flex: 1;
    min-height: 0;
    margin-top: 3px;
    border: 1px solid #999;
    background: #fff;
    overflow: hidden;
  }

  .tree ul {
    flex: 1;
    margin: 0;
    padding: 0;
    list-style: none;
  }

  .tree li {
    display: flex;
    align-items: center;
    height: 10px;
  }

  .tree .icon {
    width: 11px;
    height: 10px;
  }

  .tree li:first-child .icon {
    width: 6px;
  }

  .guide {
    height: 10px;
  }

  .guide path {
    fill: none;
    stroke: #888;
  }

  .tree li button {
    height: 10px;
    padding: 0 1px;
    line-height: 10px;
  }

  .tree li .selected {
    width: 102px;
    margin-left: 1px;
    background: #3897f5;
  }

  .hscroll {
    display: flex;
    align-items: center;
    height: 10px;
    padding: 0 4px;
    background: #eee;
  }

  .hscroll > svg {
    width: 3px;
    height: 5px;
  }

  .track {
    flex: 1;
    padding-left: 9%;
  }

  .thumb {
    width: 68%;
    height: 7px;
    border: 1px solid #999;
    background: repeating-linear-gradient(90deg, #777 0 1px, transparent 1px 2px) center / 5px 4px no-repeat, linear-gradient(#f4f4f4, #cfcfcf);
  }

  .viewport {
    flex: 1;
    min-width: 0;
    background: #000;
  }

  .viewport svg {
    width: 100%;
    height: 100%;
  }

  .bright,
  .dim,
  .mid,
  .hole {
    fill: none;
    stroke: #27c32b;
    stroke-width: 1.5;
  }

  .dim {
    stroke: #1d7a28;
  }

  .mid {
    stroke: #2c9636;
    stroke-width: 1;
  }

  .hole {
    stroke: #239232;
    stroke-width: 1;
  }

  .engraving {
    fill: none;
    stroke: #2c9638;
    stroke-width: 1;
    font: bold 36px "DejaVu Sans", sans-serif;
    text-anchor: middle;
  }

  .bounds {
    stroke: #8d1b25;
    stroke-dasharray: 10 3 3 3;
  }

  .axis-near {
    fill: none;
    stroke: #915025;
  }

  .axis-far {
    stroke: #56561f;
  }

  .gnomon text {
    font: 8px "Liberation Sans", Arial, sans-serif;
  }

  .view-info {
    fill: #e8e8e8;
    font: bold 8px "Liberation Serif", "Times New Roman", serif;
  }

  .scale {
    fill: #35df35;
    font: bold 8px "Liberation Sans", Arial, sans-serif;
  }

  .status {
    display: flex;
    align-items: center;
    gap: 3px;
    flex: none;
    height: 17px;
    overflow: hidden;
    border-top: 1px solid #ccc;
    box-sizing: border-box;
    background: #f0efee;
    font-size: 7px;
  }

  .status > * {
    flex: none;
  }

  .status .hint {
    flex: 1;
    padding-left: 1px;
  }

  .flat {
    height: 13px;
    padding: 0 2px;
    border: 1px solid #ccc;
    background: #f3f3f3;
  }

  .flat.wide {
    padding: 0 4px;
  }

  .depth {
    display: flex;
    width: 52px;
    height: 13px;
    background: #fff;
  }

  .depth input {
    flex: 1;
    min-width: 0;
    padding-left: 3px;
    background: linear-gradient(90deg, #fff 2px, #3897f5 2px 13px, #ffff80 13px);
    color: #fff;
  }

  .depth button {
    display: flex;
    align-items: center;
    justify-content: center;
    width: 13px;
  }

  .color {
    width: 20px;
    height: 12px;
    background: #00ed16;
  }

  .color-drop {
    display: flex;
    align-items: center;
    width: 7px;
    height: 13px;
  }

  .level {
    width: 61px;
    height: 13px;
    background: #fff;
  }

  .style {
    display: flex;
    align-items: center;
    gap: 5px;
    height: 13px;
    padding: 0 3px;
    background: #fff;
  }

  .style i {
    width: 24px;
    height: 2px;
    background: #222;
  }

  .style .thin {
    width: 28px;
    height: 1px;
  }

  .taskbar {
    position: relative;
    display: flex;
    align-items: center;
    flex: none;
    height: 24px;
    border-top: 1px solid #8aa9c8;
    box-sizing: border-box;
    background: linear-gradient(90deg, #2c7db1 0, #2686c4 25%, #2a7fc4 45%, #1d61aa 60%, #2c79bf 70%, #2b73b5 78%, #1e4d88 84%, #173e74 100%);
    color: #fff;
  }

  .swoosh {
    position: absolute;
    inset: 0;
    width: 100%;
    height: 100%;
  }

  .swoosh path {
    fill: none;
    stroke: #8bbcf0;
    stroke-width: 6;
    opacity: 0.8;
  }

  .start {
    width: 34px;
    padding-left: 5px;
  }

  .taskbar button svg {
    width: 22px;
    height: 22px;
  }

  .task {
    display: flex;
    align-items: center;
    justify-content: center;
    width: 37px;
    height: 23px;
    margin-left: 2px;
    box-sizing: border-box;
  }

  .open {
    border: 1px solid #8dbbd8;
    background: #5fa0c9;
  }

  .current {
    border: 1px solid #e1eef7;
    background: #b4d2e6;
  }

  .tray {
    display: flex;
    gap: 3px;
    margin-left: auto;
  }

  .tray svg {
    width: 12px;
    height: 12px;
  }

  .clock {
    position: relative;
    display: flex;
    flex-direction: column;
    align-items: center;
    margin: 0 7px 0 9px;
  }

  .peek {
    width: 8px;
    height: 23px;
    border: 1px solid #6485aa;
    background: #1c4b80;
  }
</style>
